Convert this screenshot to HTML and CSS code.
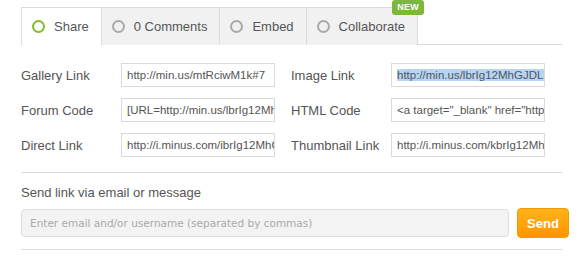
FILE: index.html
```html
<!DOCTYPE html>
<html lang="en">
<head>
    <meta charset="UTF-8">
    <title>Share</title>
    <link rel="stylesheet" href="styles.css">
</head>
<body>

<div class="panel">
    <!-- Tabs -->
    <div class="tabs">
        <div class="tab active"><span class="dot"></span>Share</div>
        <div class="tab"><span class="dot"></span>0 Comments</div>
        <div class="tab"><span class="dot"></span>Embed</div>
        <div class="tab"><span class="dot"></span>Collaborate<span class="badge">NEW</span></div>
    </div>

    <!-- Link fields -->
    <div class="links">
        <div class="field">
            <label>Gallery Link</label>
            <div class="box">http://min.us/mtRciwM1k#7</div>
        </div>
        <div class="field">
            <label>Image Link</label>
            <div class="box"><span class="selected">http://min.us/lbrIg12MhGJDLI</span></div>
        </div>
        <div class="field">
            <label>Forum Code</label>
            <div class="box">[URL=http://min.us/lbrIg12MhGJDLI]</div>
        </div>
        <div class="field">
            <label>HTML Code</label>
            <div class="box">&lt;a target="_blank" href="http://min.us/lbrIg12MhGJDLI"&gt;</div>
        </div>
        <div class="field">
            <label>Direct Link</label>
            <div class="box">http://i.minus.com/ibrIg12MhGJDLI.jpg</div>
        </div>
        <div class="field">
            <label>Thumbnail Link</label>
            <div class="box">http://i.minus.com/kbrIg12MhGJDLI.jpg</div>
        </div>
    </div>

    <!-- Send -->
    <div class="send">
        <div class="send-title">Send link via email or message</div>
        <div class="send-row">
            <div class="email">Enter email and/or username (separated by commas)</div>
            <button class="send-btn">Send</button>
        </div>
    </div>
</div>

</body>
</html>
```

FILE: styles.css
```css
body {
    margin: 0;
    background: #fff;
    font-family: "Liberation Sans", Arial, sans-serif;
}

.panel {
    width: 541px;
    padding: 7px 0 0 21px;
}

.tabs {
    display: flex;
    height: 37px;
    border-bottom: 1px solid #dcdcdc;
}

.tab {
    position: relative;
    display: flex;
    align-items: center;
    padding: 0 12px 0 10px;
    background: #f1f1f1;
    border: 1px solid #dcdcdc;
    border-left: none;
    border-bottom: none;
    font-size: 13px;
    color: #555;
    box-sizing: border-box;
    margin-bottom: -1px;
    height: 38px;
}

.tab.active {
    background: #fff;
    border-left: 1px solid #dcdcdc;
    padding-right: 12px;
}

.dot {
    width: 9px;
    height: 9px;
    border: 2px solid #a9a9a9;
    border-radius: 50%;
    margin-right: 9px;
    box-sizing: content-box;
}

.tab.active .dot {
    border-color: #80bd2e;
}

.badge {
    position: absolute;
    top: -8px;
    right: -7px;
    background: #7cb83a;
    color: #fff;
    font-size: 9px;
    font-weight: bold;
    padding: 2px 5px 3px;
    border-radius: 3px;
    letter-spacing: 0.3px;
}

.links {
    display: grid;
    grid-template-columns: 254px 254px;
    column-gap: 16px;
    row-gap: 11px;
    padding: 18px 0 15px;
    border-bottom: 1px solid #dcdcdc;
}

.field {
    display: flex;
    align-items: center;
}

.field label {
    flex-shrink: 0;
    width: 100px;
    font-size: 13px;
    color: #555;
    white-space: nowrap;
}

.box {
    width: 142px;
    height: 22px;
    line-height: 22px;
    padding: 0 5px;
    border: 1px solid #dadada;
    font-size: 11.5px;
    color: #555;
    white-space: nowrap;
    overflow: hidden;
}

.selected {
    background: #b6d4f5;
}

.send {
    padding-top: 12px;
    padding-bottom: 11px;
    border-bottom: 1px solid #dcdcdc;
}

.send-title {
    font-size: 13px;
    color: #555;
    margin-bottom: 8px;
}

.send-row {
    display: flex;
    align-items: center;
    gap: 8px;
    width: 548px;
}

.email {
    flex: 1;
    height: 26px;
    line-height: 26px;
    padding: 0 8px;
    background: #f3f3f3;
    border: 1px solid #dedede;
    border-radius: 4px;
    font-family: "DejaVu Sans", sans-serif;
    font-size: 10.5px;
    color: #aaa;
}

.send-btn {
    width: 52px;
    height: 30px;
    border: 1px solid #f39a00;
    border-radius: 4px;
    background: linear-gradient(#ffb31a, #ff9500);
    color: #fff;
    font-family: "Liberation Sans", Arial, sans-serif;
    font-size: 13px;
    font-weight: bold;
}
```
